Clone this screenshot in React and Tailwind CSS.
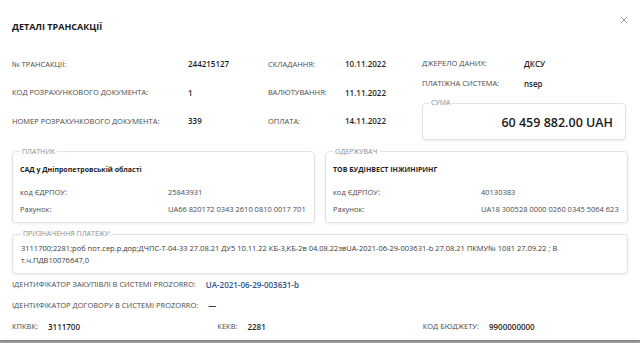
import React from 'react';
import { X } from 'lucide-react';

const Field = ({ label, value, className = '' }) => (
    <div className={`flex items-center gap-[10px] ${className}`}>
        <span className="text-[7.5px] uppercase text-[#4a4a4a]">{label}</span>
        <span className="text-[8px] font-semibold text-[#1f1f1f]">{value}</span>
    </div>
);

const Party = ({ title, name, code, account }) => (
    <fieldset className="border border-[#e3e3e3] rounded-[4px] px-[7px] pb-[4px] shadow-[0_1px_3px_rgba(0,0,0,0.08)] min-w-0">
        <legend className="px-[2px] text-[7px] uppercase text-[#8d8d8d]">{title}</legend>
        <div className="text-[7px] font-bold text-[#1f1f1f] leading-[11px] pt-[7px] pb-[9px]">{name}</div>
        <div className="grid grid-cols-[148px_1fr] text-[7.5px] text-[#4a4a4a] leading-[17px] whitespace-nowrap">
            <span>код ЄДРПОУ:</span>
            <span>{code}</span>
            <span>Рахунок:</span>
            <span>{account}</span>
        </div>
    </fieldset>
);

export default function App() {
    return (
        <div className="w-[640px] h-[343px] bg-[#a9a9a9] font-['Open_Sans',sans-serif] overflow-hidden">
            <div className="relative h-[340px] bg-white px-[12px] shadow-[0_1px_3px_rgba(0,0,0,0.35)]">
                <button className="absolute right-[10px] top-[14px] text-[#6b6b6b]">
                    <X size={12} strokeWidth={1.4} />
                </button>

                <h1 className="pt-[19px] text-[9px] font-bold text-[#1a1a1a] leading-[16px]">ДЕТАЛІ ТРАНСАКЦІЇ</h1>

                <div className="flex mt-[15px]">
                    <div className="grid grid-cols-[176px_80px_77px_77px] auto-rows-[28.5px] items-center text-[7.5px] text-[#4a4a4a]">
                        <span className="uppercase">№ трансакції:</span>
                        <span className="text-[8px] font-semibold text-[#1f1f1f]">244215127</span>
                        <span className="uppercase">Складання:</span>
                        <span className="text-[8px] font-semibold text-[#1f1f1f]">10.11.2022</span>

                        <span className="uppercase">Код розрахункового документа:</span>
                        <span className="text-[8px] font-semibold text-[#1f1f1f]">1</span>
                        <span className="uppercase">Валютування:</span>
                        <span className="text-[8px] font-semibold text-[#1f1f1f]">11.11.2022</span>

                        <span className="uppercase">Номер розрахункового документа:</span>
                        <span className="text-[8px] font-semibold text-[#1f1f1f]">339</span>
                        <span className="uppercase">Оплата:</span>
                        <span className="text-[8px] font-semibold text-[#1f1f1f]">14.11.2022</span>
                    </div>

                    <div className="flex-1 flex flex-col pt-[4px] pr-[2px]">
                        <div className="grid grid-cols-[102px_1fr] auto-rows-[20px] items-center text-[7.5px] text-[#4a4a4a]">
                            <span className="uppercase">Джерело даних:</span>
                            <span className="text-[8px] font-semibold text-[#1f1f1f]">ДКСУ</span>
                            <span className="uppercase">Платіжна система:</span>
                            <span className="text-[8px] font-semibold text-[#1f1f1f]">nsep</span>
                        </div>
                        <fieldset className="mt-[4px] border border-[#e3e3e3] rounded-[4px] px-[6px] pb-[8px] shadow-[0_1px_3px_rgba(0,0,0,0.08)]">
                            <legend className="px-[2px] text-[7px] uppercase text-[#8d8d8d]">Сума</legend>
                            <div className="pt-[6px] text-right text-[12.5px] font-semibold text-[#1a1a1a] leading-[16px] pr-[6px]">60 459 882.00 UAH</div>
                        </fieldset>
                    </div>
                </div>

                <div className="grid grid-cols-2 gap-[10px] mt-[7px]">
                    <Party title="Платник" name="САД у Дніпропетровській області" code="25843931" account="UA66 820172 0343 2610 0810 0017 701" />
                    <Party title="Одержувач" name="ТОВ БУДІНВЕСТ ІНЖИНІРИНГ" code="40130383" account="UA18 300528 0000 0260 0345 5064 623" />
                </div>

                <fieldset className="mt-[6px] border border-[#e3e3e3] rounded-[4px] px-[8px] pb-[7px] shadow-[0_1px_3px_rgba(0,0,0,0.08)]">
                    <legend className="px-[2px] text-[7px] uppercase text-[#8d8d8d]">Призначення платежу:</legend>
                    <p className="pt-[2px] text-[7.5px] leading-[12px] text-[#3a3a3a]">
                        3111700;2281;роб пот.сер.р.дор;ДЧПС-Т-04-33 27.08.21 ДУ5 10.11.22 КБ-3,КБ-2в 04.08.22звUA-2021-06-29-003631-b 27.08.21 ПКМУ№ 1081 27.09.22 ; В
                        <br />
                        т.ч.ПДВ10076647,0
                    </p>
                </fieldset>

                <div className="mt-[4px] flex flex-col gap-[7px]">
                    <div className="flex items-center gap-[10px] h-[14px]">
                        <span className="text-[7.5px] uppercase text-[#4a4a4a]">Ідентифікатор закупівлі в системі Prozorro:</span>
                        <span className="text-[8px] font-semibold text-[#2f4f8a]">UA-2021-06-29-003631-b</span>
                    </div>
                    <Field label="Ідентифікатор договору в системі Prozorro:" value="—" className="h-[14px]" />
                </div>

                <div className="grid grid-cols-3 mt-[7px] h-[14px] items-center">
                    <Field label="КПКВК:" value="3111700" />
                    <Field label="КЕКВ:" value="2281" />
                    <Field label="Код бюджету:" value="9900000000" />
                </div>
            </div>
        </div>
    );
}
